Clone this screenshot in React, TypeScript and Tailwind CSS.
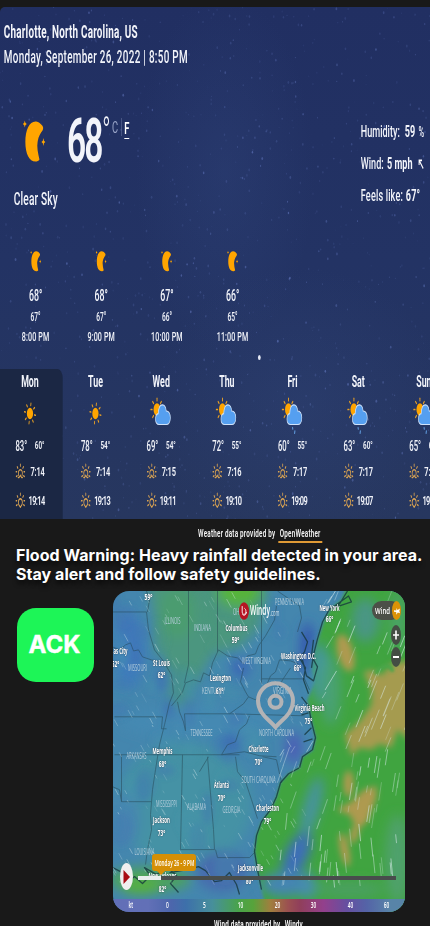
import React from "react";

const rand = (seed: number) => {
  let s = seed;
  return () => {
    s = (s * 16807) % 2147483647;
    return s / 2147483647;
  };
};

/* ---------- weather glyphs (drawn at natural width) ---------- */

function Moon({ className }: { className: string }) {
  return (
    <svg viewBox="0 0 40 44" preserveAspectRatio="none" className={className} fill="#ffa500">
      <path d="M22 2.500C11 2.500 4 11 4 23S11 42.500 22 42.500C25 42.500 27.500 42 29 40.500C26.500 34 24 28 25.800 22.500C27.500 17 31 14 34.500 11.500C36 10 36 8.300 34.300 6.800C30.500 4 26 2.500 22 2.500z" />
      <path d="M3 1.500l1 2.200L6.500 5 4 6.200 3 8.500 2 6.200-.5 5 2 3.700zM36 19l1 2.700L39.500 23 37 24.300 36 27l-1-2.700L32.500 23l2.500-1.300z" />
    </svg>
  );
}

function Sun({ className }: { className: string }) {
  const rays = [10, 55, 100, 145, 190, 235, 280, 325];
  return (
    <svg viewBox="0 0 24 24" className={className}>
      <circle cx="12" cy="12" r="5.900" fill="#ffa500" />
      {rays.map((a) => (
        <line key={a} x1="12" y1="3.400" x2="12" y2="1.200" stroke="#eaa124" strokeWidth="1.700" strokeLinecap="round" transform={`rotate(${a} 12 12)`} />
      ))}
    </svg>
  );
}

function CloudSun({ rain }: { rain?: boolean }) {
  return (
    <svg viewBox="0 0 36 38" className="mt-[5px] h-[38px] w-[36px] overflow-visible">
      <circle cx="10.500" cy="11.500" r="6.300" fill="#ffa500" />
      {[180, 225, 270, 315, 0, 45].map((a) => (
        <line key={a} x1="10.500" y1="2.700" x2="10.500" y2="0.300" stroke="#eaa124" strokeWidth="1.700" strokeLinecap="round" transform={`rotate(${a} 10.500 11.500)`} />
      ))}
      <path d="M14 26.500c-4 0-6.200-2.300-6.200-5.300s2-5.200 5-5.500C13.200 10 16 6.800 20.200 6.800c4 0 6.500 2.600 7 6.200 4.500-.2 7.500 2.700 7.500 6.800s-3 6.700-7 6.700z" fill="#559ff0" stroke="#cfe2fa" strokeWidth="1.200" />
      {rain && (
        <g stroke="#65a4e8" strokeWidth="1.700" strokeLinecap="round">
          <path d="M18 29.700l.4 1.200M22.200 33l-.5 2.200" />
        </g>
      )}
    </svg>
  );
}

function Horizon({ set }: { set?: boolean }) {
  return (
    <svg viewBox="0 0 18 16" className="h-4 w-[18px]" fill="none" stroke="#dba452" strokeWidth="1.500" strokeLinecap="round">
      <path d="M9 1.300v2M3.300 3.700l1.200 1.500M14.700 3.700l-1.200 1.500M.8 8.800h1.800M15.400 8.800h1.800M1.500 13.500l1.800-.7M16.500 13.500l-1.800-.7" />
      {set ? (
        <path d="M6.800 13.300C4.800 12 4.500 7 9 6.700c4.500.3 4.200 5.300 2.200 6.600M6.800 13.300L9 15.300l2.200-2" />
      ) : (
        <path d="M5.800 12.300C4.500 9.500 6 6.700 9 6.700s4.500 2.800 3.200 5.600M5 14.600h1.700L9 12.300l2.300 2.300H13" />
      )}
    </svg>
  );
}

function Stars() {
  const r = rand(77);
  const stars = Array.from({ length: 1000 }, () => ({
    x: r() * 430,
    y: r() * 512,
    w: 0.35 + r() * 0.55,
    o: 0.1 + r() * r() * 0.42,
  }));
  return (
    <svg viewBox="0 0 430 512" className="absolute inset-0 h-[512px] w-[430px]">
      <defs>
        <radialGradient id="haze">
          <stop offset="0" stopColor="#3c5590" stopOpacity="0.200" />
          <stop offset="1" stopColor="#3c5590" stopOpacity="0" />
        </radialGradient>
      </defs>
      <ellipse cx="225" cy="165" rx="90" ry="180" fill="url(#haze)" />
      <ellipse cx="300" cy="400" rx="150" ry="140" fill="url(#haze)" />
      {stars.map((s, i) => (
        <ellipse key={i} cx={s.x} cy={s.y} rx={s.w} ry={s.w * 1.700} fill="#7389d6" opacity={s.o} />
      ))}
    </svg>
  );
}

/* ---------- data ---------- */

const hours = [
  ["68°", "67°", "8:00 PM"],
  ["68°", "67°", "9:00 PM"],
  ["67°", "66°", "10:00 PM"],
  ["66°", "65°", "11:00 PM"],
];

const days = [
  { d: "Mon", k: "sun", hi: "83°", lo: "60°", up: "7:14", dn: "19:14" },
  { d: "Tue", k: "sun", hi: "78°", lo: "54°", up: "7:14", dn: "19:13" },
  { d: "Wed", k: "cloud", hi: "69°", lo: "54°", up: "7:15", dn: "19:11" },
  { d: "Thu", k: "cloud", hi: "72°", lo: "55°", up: "7:16", dn: "19:10" },
  { d: "Fri", k: "rain", hi: "60°", lo: "55°", up: "7:17", dn: "19:09" },
  { d: "Sat", k: "rain", hi: "63°", lo: "60°", up: "7:17", dn: "19:07" },
  { d: "Sun", k: "rain", hi: "65°", lo: "60°", up: "7:18", dn: "19:06" },
];

function WeatherPanel() {
  return (
    <section className="relative h-[512px] w-[430px] overflow-hidden rounded-tl-[5px] bg-linear-to-b from-[#212f62] via-[#233364] to-[#27375f]">
      <Stars />
      <div className="relative flex h-[512px] w-[782px] origin-left scale-x-[0.55] flex-col pt-[13px] text-[#f2f4fa]">
        <div className="h-6 pl-[7px] text-[18px] leading-6 font-bold tracking-[0.350px]">Charlotte, North Carolina, US</div>
        <div className="h-[25px] pl-[7px] text-[18px] leading-[25px] font-medium tracking-[0.550px]">Monday, September 26, 2022 | 8:50 PM</div>

        <div className="flex h-[167px] justify-between">
          <div className="pt-6">
            <div className="flex h-24 items-center">
              <Moon className="ml-[42px] h-[44px] w-[41px]" />
              <span className="ml-[39px] text-[61px] leading-none font-semibold tracking-[-3.500px]">68</span>
              <span className="ml-[1px] self-start pt-[20px] text-[40px] leading-none font-light">°</span>
              <span className="mt-[-29px] ml-[3px] flex items-center text-[17px] leading-4 text-[#9aa5c8]">
                C<span className="mx-[5px] h-[18px] w-px bg-[#66749f]" />
                <span className="border-b border-white pt-[3px] leading-[20px] font-semibold text-white">F</span>
              </span>
            </div>
            <div className="h-5 pl-[25px] text-[18.500px] leading-5 font-medium tracking-[0.3px]">Clear Sky</div>
          </div>
          <div className="w-[126px] pt-[47px] text-[16.500px] leading-8 font-medium whitespace-nowrap">
            <div className="flex h-8 items-center">Humidity:<b className="ml-[9px] font-bold">59</b><span className="ml-[6px] text-[14px]">%</span></div>
            <div className="flex h-8 items-center">Wind:<b className="ml-[6px] font-bold">5 mph</b>
              <svg viewBox="0 0 10 10" className="ml-[10px] h-[10px] w-[11px]" fill="none" stroke="white" strokeWidth="1.800"><path d="M9 9.500L2.200 2M1.500 6V1.300h5.300" /></svg>
            </div>
            <div className="flex h-8 items-center tracking-[0.300px]">Feels like:<b className="ml-[5px] font-bold">67°</b></div>
          </div>
        </div>

        <div className="flex h-[110px] pl-[5px]">
          {hours.map(([t, f, h]) => (
            <div key={h} className="w-[119.400px] text-center">
              <div className="flex h-[50px] items-center justify-center"><Moon className="h-[22px] w-[20px]" /></div>
              <div className="h-5 text-[16px] leading-5 font-medium">{t}</div>
              <div className="h-[22px] text-[12px] leading-[22px] font-medium">{f}</div>
              <div className="h-[18px] text-[13px] leading-[18px] font-medium tracking-[0.2px]">{h}</div>
            </div>
          ))}
        </div>
        <div className="flex h-[23px] items-center pl-[469px]"><span className="h-[5px] w-[5px] rounded-full bg-[#e6eaf6]" /></div>

        <div className="flex h-[150px]">
          {days.map((d, i) => (
            <div key={d.d} className={i === 0 ? "w-[114px] shrink-0 rounded-tr-[9px] bg-[#1b2744]" : "w-[119.400px] shrink-0"}>
              <div className={i === 0 ? "ml-[-5px] w-[119px]" : "w-[119.400px]"}>
                <div className="h-6 text-center text-[16px] leading-[25px] font-bold">{d.d}</div>
                <div className="flex h-[42px] items-center justify-center">
                  {d.k === "sun" ? <Sun className="mb-[1px] h-[23px] w-[23px]" /> : <CloudSun rain={d.k === "rain"} />}
                </div>
                <div className="mx-auto flex h-[22px] w-[53px] items-center justify-between">
                  <span className="text-[14px] font-medium">{d.hi}</span>
                  <span className="text-[11.500px] font-semibold">{d.lo}</span>
                </div>
                <div className="mx-auto flex h-7 w-[53px] items-center justify-between text-[13.500px] font-semibold">
                  <Horizon />
                  <span className="tracking-[-0.300px]">{d.up}</span>
                </div>
                <div className="mx-auto flex h-[30px] w-[53px] items-center justify-between text-[13.500px] font-semibold">
                  <Horizon set />
                  <span className="tracking-[-1.100px]">{d.dn}</span>
                </div>
              </div>
            </div>
          ))}
        </div>
      </div>
    </section>
  );
}

/* ---------- wind map ---------- */

const seaPath =
  "M348 585L342 600L331 609L325 620L319 638L315 652L313 670L316 682L308 700L312 720L316 738L313 751L303 757L300 768L289 774L281 783L277 797L271 810L262 822L257 836L255 852L258 870L261 885L268 915H410V585Z";

const states: string[] = [
  "M113 612H147L149 630L155 650L163 660L172 675L174 693L170 703L165 725L160 745L156 770L153 790L151 815L152 830L148 850",
  "M147 591L150 600L148 612M189 591V665L185 683M218 591V652M113 647L120 650L126 645L131 643L134 651L139 650L143 657L152 660L160 662",
  "M277 606L275 620L266 636L259 646L256 654L248 656L244 664L238 658L228 656L219 650L213 663L210 676L204 673L201 682L194 680L186 683L183 692L177 700L172 706",
  "M244 668L241 682L246 692L249 697L256 700L262 692L266 688L271 676L276 672L280 660L291 661L299 664",
  "M249 697L244 704L237 709L230 714H185L186 731L184 722L180 712L178 702",
  "M230 714L305 716M250 716L247 724L240 730L236 742L228 745L222 755L245 752L260 756L277 757",
  "M115 717H163L162 729H167",
  "M115 755H240M183 755L181 850H215L214 830L208 757M236 757L238 772L246 782L252 800L258 819",
  "M263 757L277 760L282 783M209 757L200 772M122 802H152M122 755V802",
  "M262 591V679H305L310 690M262 679V684M278 591L300 606L302 618L298 632M274 700L283 680L291 668",
  "M148 850L146 865M216 850L218 858H250L255 853M113 787L120 790L122 802",
];

const shore =
  "M348 591L340 604L330 609L323 622L318 639L314 655L312 668M331 609L349 596L352 602L340 606L331 609M302 632L308 642L305 652L300 658L306 668L304 680L309 694M314 640L312 656L318 667L314 681L307 676L303 660M302 697L309 706L312 722L316 738L313 750L303 757L300 768L289 774L281 783L277 797L271 810L262 822L257 836L255 852L258 870L262 890M305 735L312 728M304 742L313 739M302 715L309 713M113 868L123 873L129 882L135 877L143 884L151 876L145 868L157 875L168 868L177 876L171 884L179 893M170 873L188 870L199 867L206 871L215 882L222 881L230 873L237 885L240 895";

const cities: [string, number, number, number, string, number, number][] = [
  ["Columbus", 237, 631, 22, "59°", 236, 643.500],
  ["New York", 330, 611, 20, "66°", 330, 622.500],
  ["Washington D.C.", 299, 659.500, 35, "66°", 298, 671.500],
  ["St Louis", 162, 666.500, 17, "62°", 162, 678.500],
  ["Lexington", 221, 681, 21, "61°", 220, 694],
  ["as City", 121, 654, 14, "52°", 116, 667],
  ["Virginia Beach", 310, 711.500, 30, "75°", 309, 724],
  ["Charlotte", 259, 752, 20, "70°", 259, 765],
  ["Memphis", 163, 754, 20, "68°", 163, 767.500],
  ["Atlanta", 222, 788.500, 15, "70°", 222, 801.500],
  ["Charleston", 268, 811, 23, "79°", 268, 824],
  ["Jackson", 162, 823, 17, "73°", 162, 836],
  ["New Orleans", 163, 879, 28, "82°", 163, 892],
  ["Jacksonville", 251, 871, 25, "80°", 250, 884],
];

const regions: [string, number, number, number][] = [
  ["ILLINOIS", 173, 624.500, 16],
  ["INDIANA", 203, 631, 17],
  ["OHIO", 239, 615, 11],
  ["PENNSYLVANIA", 290, 605, 29],
  ["WEST VIRGINIA", 257, 664, 29],
  ["MISSOURI", 138, 671, 19],
  ["KENTUCKY", 214, 694.500, 23],
  ["VIRGINIA", 283, 694, 19],
  ["NORTH CAROLINA", 277, 736, 35],
  ["TENNESSEE", 202, 736, 22],
  ["ARKANSAS", 137, 759, 20],
  ["SOUTH CAROLINA", 259, 783.500, 34],
  ["MISSISSIPPI", 167, 807, 21],
  ["ALABAMA", 197, 810.500, 19],
  ["GEORGIA", 232, 813.500, 18],
  ["LOUISIANA", 145, 855.500, 20],
];

function WindField() {
  const r = rand(4211);
  const land = Array.from({ length: 200 }, () => {
    const x = 113 + r() * 190, y = 591 + r() * 290, l = (y < 720 ? 4 : 2) + r() * 5;
    return { x, y, dx: l * 0.55, dy: l, o: 0.15 + r() * 0.4 };
  });
  const sea = Array.from({ length: 150 }, () => {
    const y = 600 + r() * 290;
    const x = (y < 750 ? 322 : 275) + r() * 125, l = 6 + r() * 14;
    const lean = y < 760 ? 0.4 : y < 830 ? 0.15 : -0.1;
    return { x, y, dx: l * (lean + (x < 330 ? 0.2 : 0)), dy: -l, o: 0.3 + r() * 0.45 };
  });
  const mottles = Array.from({ length: 55 }, () => {
    const x = 113 + r() * 185, y = 600 + r() * 280;
    const green = y < 660 && x > 150 && x < 262;
    return { x, y, a: 4 + r() * 9, b: 6 + r() * 12, c: green ? "#4a9b78" : r() > 0.5 ? "#3f70b4" : "#4596ac", o: 0.15 + r() * 0.25 };
  });
  return (
    <svg viewBox="113.500 591 292 321" preserveAspectRatio="none" className="absolute inset-0 h-full w-full">
      <defs>
        <filter id="soft" x="-40%" y="-40%" width="180%" height="180%"><feGaussianBlur stdDeviation="6" /></filter>
        <filter id="mid" x="-30%" y="-30%" width="160%" height="160%"><feGaussianBlur stdDeviation="3.200" /></filter>
        <filter id="fine" x="-30%" y="-30%" width="160%" height="160%"><feGaussianBlur stdDeviation="1.800" /></filter>
      </defs>
      <rect x="113" y="591" width="293" height="321" fill="#4486ae" />
      <g filter="url(#soft)">
        <ellipse cx="130" cy="650" rx="14" ry="38" fill="#3f7cbc" />
        <path d="M148 580H270L262 625L240 648L215 652L195 685L175 690L160 650Z" fill="#4b967f" />
        <ellipse cx="178" cy="612" rx="18" ry="26" fill="#4c9c70" />
        <ellipse cx="240" cy="592" rx="22" ry="15" fill="#57b43a" />
        <ellipse cx="180" cy="690" rx="12" ry="24" fill="#47908f" />
        <ellipse cx="200" cy="722" rx="80" ry="16" fill="#4489b2" />
        <ellipse cx="185" cy="805" rx="68" ry="62" fill="#4592a5" />
        <ellipse cx="127" cy="820" rx="13" ry="30" fill="#4787b0" />
        <ellipse cx="150" cy="880" rx="42" ry="13" fill="#4ba062" />
        <ellipse cx="141" cy="887" rx="20" ry="8" fill="#57b13b" />
        <ellipse cx="222" cy="872" rx="26" ry="20" fill="#466cae" />
        <ellipse cx="294" cy="748" rx="8" ry="16" fill="#4b5eb5" />
        <ellipse cx="308" cy="650" rx="7" ry="28" fill="#3555b0" />
        <ellipse cx="240" cy="668" rx="11" ry="10" fill="#3c6ab5" />
        <ellipse cx="235" cy="742" rx="12" ry="8" fill="#3c6ab5" />
      </g>
      <g filter="url(#mid)">
        {mottles.map((m, i) => <ellipse key={i} cx={m.x} cy={m.y} rx={m.a} ry={m.b} fill={m.c} opacity={m.o} />)}
      </g>
      <path d={seaPath} fill="#40a440" filter="url(#fine)" />
      <g filter="url(#soft)">
        <ellipse cx="366" cy="620" rx="14" ry="22" fill="#4a9683" />
        <ellipse cx="320" cy="672" rx="8" ry="30" fill="#4494a4" />
        <ellipse cx="331" cy="690" rx="10" ry="36" fill="#48a173" />
        <ellipse cx="312" cy="808" rx="8" ry="32" fill="#4793a0" transform="rotate(15 312 808)" />
        <ellipse cx="297" cy="856" rx="11" ry="26" fill="#3d6dba" transform="rotate(25 297 856)" />
        <ellipse cx="285" cy="885" rx="24" ry="12" fill="#4485b2" />
        <ellipse cx="308" cy="886" rx="8" ry="14" fill="#478db0" />
        <ellipse cx="398" cy="860" rx="12" ry="45" fill="#50a16c" />
        <ellipse cx="350" cy="890" rx="35" ry="9" fill="#4aa05f" />
        <ellipse cx="398" cy="620" rx="7" ry="30" fill="#4ba36a" />
      </g>
      <g filter="url(#mid)" fill="#ae9a50">
        <ellipse cx="346" cy="653" rx="8" ry="19" transform="rotate(-15 346 653)" />
        <path d="M364 672L374 670L382 676L392 664L412 660V742L398 730L392 748L380 744L372 750L360 748L352 756L345 735L360 722L372 705L372 690Z" opacity="0.920" />
        <ellipse cx="349" cy="784" rx="5" ry="13" />
        <path d="M337 810L352 802L364 790L377 786L377 798L368 822L358 830L350 815Z" />
        <ellipse cx="345" cy="850" rx="4.500" ry="17" transform="rotate(-12 345 850)" />
        <ellipse cx="355" cy="834" rx="4" ry="10" transform="rotate(15 355 834)" />
      </g>
      <path d="M376 674C382 664 392 664 393 672" fill="none" stroke="#4aa64a" strokeWidth="4" filter="url(#fine)" />
      <g fill="none" stroke="#24424e" strokeWidth="0.800" opacity="0.600">
        {states.map((d) => <path key={d} d={d} />)}
      </g>
      <path d={shore} fill="none" stroke="#17383e" strokeWidth="1.300" strokeLinejoin="round" opacity="0.800" />
      <g stroke="#dceef0" strokeWidth="0.800">
        {land.map((s, i) => <line key={i} x1={s.x} y1={s.y} x2={s.x + s.dx} y2={s.y + s.dy} opacity={s.o} />)}
        {sea.map((s, i) => <line key={`s${i}`} x1={s.x} y1={s.y} x2={s.x + s.dx} y2={s.y + s.dy} opacity={s.o} />)}
      </g>
      <g textAnchor="middle" className="font-['Open_Sans','Noto_Sans',sans-serif]">
        <g fill="#b5cddb" fontSize="9">
          {regions.map(([n, x, y, w]) => (
            <text key={n} x={x} y={y} textLength={w} lengthAdjust="spacingAndGlyphs">{n}</text>
          ))}
        </g>
        <g fill="white" fontSize="9.300" fontWeight="700" className="[text-shadow:0_0_2px_#234]">
          <text x="149" y="600" textLength="8" lengthAdjust="spacingAndGlyphs">59°</text>
          {cities.map(([n, x, y, w, t, tx, ty]) => (
            <g key={n}>
              <text x={x} y={y} textLength={w} lengthAdjust="spacingAndGlyphs">{n}</text>
              <text x={tx} y={ty} textLength={7.500} lengthAdjust="spacingAndGlyphs">{t}</text>
            </g>
          ))}
        </g>
      </g>
      <ellipse cx="244.500" cy="611" rx="5" ry="8.800" fill="#b51422" />
      <path d="M242.700 606.500v5.500c0 3.200 3.700 3.200 3.700-.3 0-1.700-.5-2.700-1.200-3.200M247 612.500c-.6 2.800-2.700 3.800-4 2" fill="none" stroke="#fff" strokeWidth="0.900" strokeLinecap="round" />
      <g className="font-['Open_Sans',sans-serif]" fill="white">
        <text x="250.500" y="615.500" fontSize="13.500" fontWeight="600" textLength="20" lengthAdjust="spacingAndGlyphs">Windy</text>
        <text x="270.500" y="616.500" fontSize="9.500" textLength="9.500" lengthAdjust="spacingAndGlyphs" opacity="0.750">.com</text>
      </g>
      <g fill="none" stroke="#b3b3b5" strokeWidth="4">
        <path d="M276 727.500C270 720 258.500 714 258.500 701a17.500 17.500 0 0 1 35 0C293.500 714 282 720 276 727.500z" strokeLinejoin="round" />
        <circle cx="276" cy="702" r="6" />
      </g>
    </svg>
  );
}

function WindMap() {
  const ticks = ["kt", "0", "5", "10", "20", "30", "40", "60"];
  return (
    <section className="relative ml-[113px] flex h-[320.500px] w-[292px] flex-col overflow-hidden rounded-[16px]">
      <WindField />
      <div className="relative flex flex-1 flex-col items-end pt-[10px] pr-[4px] font-['Open_Sans',sans-serif] text-white">
        <div className="flex h-[19px] w-[29px] items-center justify-end rounded-full bg-[#4c5048]">
          <span className="w-[20px] origin-left translate-x-[3px] scale-x-[0.67] text-[9px] font-semibold">Wind</span>
          <span className="flex h-[19px] w-[9px] items-center justify-center rounded-[50%] bg-[#dc9207]">
            <svg viewBox="0 0 6 10" className="h-[10px] w-[6px]" fill="white"><path d="M0 4.300l2.300.2L2.500 2l1 2L6 2.500 5.300 5l.7 2.300-2.200-.8L2.300 8.800 2.200 6 0 5.800z" /></svg>
          </span>
        </div>
        <div className="mt-[5px] flex h-[20px] w-[10px] items-center justify-center rounded-[50%] bg-[#444d44]">
          <svg viewBox="0 0 6 10" className="h-[10px] w-[6px]" stroke="white" strokeWidth="1.600"><path d="M0 5h6M3 0.500v9" /></svg>
        </div>
        <div className="mt-[2px] flex h-[20px] w-[10px] items-center justify-center rounded-[50%] bg-[#444d44]">
          <svg viewBox="0 0 6 10" className="h-[10px] w-[6px]" stroke="white" strokeWidth="1.800"><path d="M0 5h6" /></svg>
        </div>
      </div>
      <div className="relative flex h-[27px] items-center pl-[7px]">
        <span className="flex h-[27px] w-[13px] items-center justify-center rounded-[50%] bg-[#efefef]">
          <svg viewBox="0 0 7 14" className="h-[14px] w-[7px]" fill="#a90d14"><path d="M0.500 0L7 7L0.500 14Z" /></svg>
        </span>
        <span className="mt-[3px] ml-[5px] h-[4px] w-[23px] bg-[#e9eeee]" />
        <span className="mt-[3px] h-[4px] w-[235px] bg-[#484d4c]" />
        <span className="absolute top-[-9px] left-[39px] flex h-[17px] w-[44px] items-center justify-center rounded-[3px] bg-[#d58f06] font-['Open_Sans',sans-serif] text-[9px] font-semibold whitespace-nowrap text-white after:absolute after:top-[17px] after:left-[5px] after:border-x-[4px] after:border-t-[4px] after:border-x-transparent after:border-t-[#d58f06] after:content-['']">
          <span className="scale-x-[0.52]">Monday 26 - 9 PM</span>
        </span>
      </div>
      <div className="relative mt-[8.500px] flex h-[13px] items-center bg-[linear-gradient(90deg,#626fb7_0%,#6270b7_12%,#4c66ac_20%,#3d70aa_25%,#478f9b_34%,#49a34a_43%,#57a33b_48%,#a17e3e_54%,#9b5051_60%,#903f5b_64%,#93408c_72%,#664fa0_80%,#5464a7_87%,#5884a8_95%)] font-['Open_Sans',sans-serif] text-[8px] font-semibold text-white">
        {ticks.map((t) => (
          <span key={t} className="relative w-[36.500px] shrink-0 text-center"><span className="inline-block scale-x-[0.6]">{t}</span></span>
        ))}
      </div>
    </section>
  );
}

export default function App() {
  return (
    <main className="flex h-[926px] w-[430px] flex-col overflow-hidden bg-[#191919] pt-[7px] font-[Roboto,'Liberation_Sans',sans-serif]">
      <WeatherPanel />
      <div className="flex h-[27px] shrink-0 items-start pt-[6px] pl-[198px] text-[#f4f4f4]">
        <div className="flex w-[225px] shrink-0 origin-left scale-x-[0.55] gap-[5px] text-[11.500px] leading-4 font-semibold tracking-[0.400px] whitespace-nowrap">
          <span>Weather data provided by</span>
          <span className="border-b-2 border-[#df9a35] px-[3px]">OpenWeather</span>
        </div>
      </div>
      <p className="h-[45px] shrink-0 pl-4 font-[Inter,sans-serif] text-[16px] leading-[19px] font-bold tracking-[0.04px] whitespace-nowrap text-white [text-shadow:0_4px_4px_rgba(0,0,0,0.6)]">
        Flood Warning: Heavy rainfall detected in your area.
        <br />
        Stay alert and follow safety guidelines.
      </p>
      <div className="flex h-[321px] shrink-0">
        <button className="mt-[17px] ml-[17px] h-[74px] w-[77px] shrink-0 rounded-[19px] bg-[#1df557] pr-[2px] font-[Inter,sans-serif] text-[24px] font-bold text-white [-webkit-text-stroke:0.4px_white]">ACK</button>
        <div className="-ml-[94px] shrink-0">
          <WindMap />
        </div>
      </div>
      <div className="flex h-[14px] shrink-0 items-start overflow-hidden pt-[4px] pl-[214px] text-[#f4f4f4]">
        <div className="flex w-[190px] shrink-0 origin-left scale-x-[0.55] gap-[8px] text-[11.500px] leading-4 font-semibold tracking-[0.3px] whitespace-nowrap">
          <span>Wind data provided by</span>
          <span>Windy</span>
        </div>
      </div>
    </main>
  );
}
